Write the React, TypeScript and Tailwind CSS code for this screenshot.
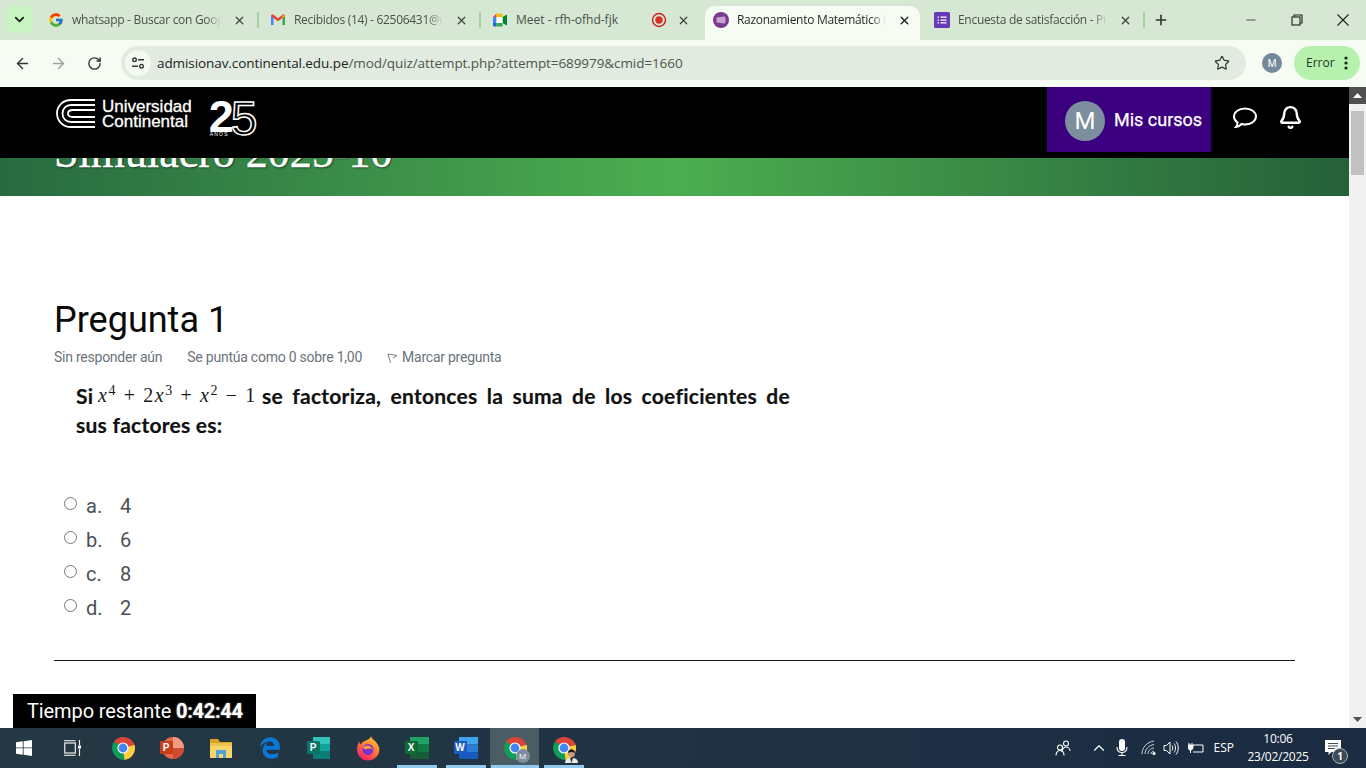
import React from "react";
import { ArrowLeft, ArrowRight, RotateCw, X, Plus, ChevronDown, Star, Minus, Bell, ChevronUp } from "lucide-react";
import { FcGoogle } from "react-icons/fc";
import { FaEdgeLegacy } from "react-icons/fa6";

const UI = { fontFamily: '"Open Sans", "Noto Sans", sans-serif' };
const RB = { fontFamily: 'Roboto, sans-serif' };

function Gmail() {
  return (
    <svg width="16" height="16" viewBox="0 0 16 16">
      <path d="M1 13V4l2.5 1.5V13z" fill="#4285f4" />
      <path d="M12.5 13V5.5L15 4v9z" fill="#34a853" />
      <path d="M1 4c0-1.5 1.5-2 2.5-1.2L8 6.2l4.5-3.4C13.5 2 15 2.500 15 4l-2.500 2L8 9.300 3.500 6z" fill="#ea4335" />
      <path d="M12.500 2.800 15 4l-2.500 2z" fill="#fbbc04" />
    </svg>
  );
}
function Meet() {
  return (
    <svg width="16" height="16" viewBox="0 0 16 16">
      <path d="M1 5l3.500-3.500V5z" fill="#ea4335" />
      <path d="M4.500 1.500H10.500V5H4.500z" fill="#fbbc04" />
      <path d="M1 5h3.500v6H1z" fill="#4285f4" />
      <path d="M1 11h3.500v3.500H2.500A1.500 1.500 0 0 1 1 13z" fill="#1967d2" />
      <path d="M4.500 11h6v3.500h-6z" fill="#34a853" />
      <path d="M10.500 1.500V14.500L10.500 8z" fill="#00832d" />
      <path d="M10.500 5v6l4.500 2.500v-11z" fill="#00832d" />
      <path d="M4.500 5H10.500V11H4.500z" fill="#fff" />
    </svg>
  );
}
function Moodle() {
  return (
    <svg width="16" height="16" viewBox="0 0 16 16">
      <circle cx="8" cy="8" r="8" fill="#7a3a8e" />
      <path d="M3.500 5.500 11 4.500c1.500 0 1.500 1 1.500 3.500s0 3.500-1.500 3.500l-7.500-1z" fill="#c7a3cf" />
    </svg>
  );
}
function Forms() {
  return (
    <svg width="16" height="16" viewBox="0 0 16 16">
      <rect width="16" height="16" rx="1.500" fill="#673ab7" />
      <path d="M6.500 4.500h6v1.300h-6zM6.500 7.400h6v1.300h-6zM6.500 10.300h6v1.300h-6z" fill="#fff" />
      <path d="M3.500 4.500h1.500v1.300H3.500zM3.500 7.400h1.500v1.300H3.500zM3.500 10.300h1.500v1.300H3.500z" fill="#fff" />
    </svg>
  );
}
function Rec() {
  return (
    <svg width="16" height="16" viewBox="0 0 16 16" className="-mr-[2px]">
      <circle cx="8" cy="8" r="6.500" fill="none" stroke="#c5221f" strokeWidth="1.400" />
      <circle cx="8" cy="8" r="3.700" fill="#d93025" />
    </svg>
  );
}

function Tab({ icon, title, active, extra, fade }: { icon: React.ReactNode; title: string; active?: boolean; extra?: React.ReactNode; fade?: boolean }) {
  return (
    <div className={active ? "h-[34px] w-[215px] mt-[6px] pb-[6px] flex items-center pl-2 pr-[8px] bg-[#f6fbf3] rounded-t-[10px] relative" : "h-[40px] w-[220px] flex items-center pl-[11px] pr-[10px]"}>
      <div className="w-4 h-4 shrink-0 flex items-center justify-center">{icon}</div>
      <div
        className={(active ? "text-[#1f2a1f] w-[150px]" : "text-[#46524a] ") + " ml-2 whitespace-nowrap overflow-hidden text-[12px] flex-1" + (fade ? " tracking-[-0.3px] [mask-image:linear-gradient(to_right,black_90%,transparent)]" : "")}
        style={UI}
      >
        {title}
      </div>
      {extra}
      <div className="w-4 h-4 flex items-center justify-center ml-[10px] shrink-0">
        <X size={13} strokeWidth={active ? 2.6 : 2.2} color={active ? "#1c241c" : "#38443a"} />
      </div>
    </div>
  );
}
const Sep = () => <div className="w-[2px] h-[16px] bg-[#a6cfa2] shrink-0" />;

function Chrome({ size = 24, children }: { size?: number; children?: React.ReactNode }) {
  return (
    <div className="relative" style={{ width: size, height: size }}>
      <svg width={size} height={size} viewBox="0 0 24 24">
        <path d="M12 12 L3 5.500 A12 12 0 0 1 23.600 8.800 Z" fill="#db4437" />
        <path d="M12 12 L3 5.500 A12 12 0 0 0 13.500 23.900 Z" fill="#0f9d58" />
        <path d="M12 12 L23.600 8.800 A12 12 0 0 1 13.500 23.900 Z" fill="#ffcd40" />
        <circle cx="12" cy="12" r="5.600" fill="#fff" />
        <circle cx="12" cy="12" r="4.400" fill="#4285f4" />
      </svg>
      {children}
    </div>
  );
}
function OfficeBadge({ letter, bg }: { letter: string; bg: string }) {
  return (
    <div className="absolute left-0 top-[5px] w-[13px] h-[13px] rounded-[1px] flex items-center justify-center text-white text-[10px] font-bold" style={{ background: bg, fontFamily: '"Liberation Sans", sans-serif' }}>
      {letter}
    </div>
  );
}
function Ppt() {
  return (
    <div className="relative w-6 h-6">
      <svg width="24" height="24" viewBox="0 0 24 24" className="absolute left-0 top-0">
        <circle cx="13" cy="12" r="11" fill="#e8664a" />
        <path d="M13 1a11 11 0 0 1 11 11H13z" fill="#f29b80" />
        <path d="M13 12h11a11 11 0 0 1-11 11z" fill="#cf4a2f" />
      </svg>
      <OfficeBadge letter="P" bg="#c43e1c" />
    </div>
  );
}
function Folder() {
  return (
    <svg width="24" height="22" viewBox="0 0 24 22">
      <path d="M1 2h8l2 3h12v16H1z" fill="#d9a520" />
      <path d="M1 6h22v15H1z" fill="#f9d66a" />
      <path d="M1 6h22v3H1z" fill="#eec24c" />
      <path d="M7 13h10v8h-3v-4h-4v4H7z" fill="#4ea3d8" />
    </svg>
  );
}
function Publisher() {
  return (
    <div className="relative w-6 h-6">
      <svg width="24" height="24" viewBox="0 0 24 24" className="absolute left-0 top-0">
        <rect x="6" y="1" width="17" height="22" rx="1.500" fill="#12a39a" />
        <rect x="6" y="1" width="17" height="7" fill="#31c4bb" />
        <rect x="6" y="15" width="17" height="8" fill="#0a7d78" />
      </svg>
      <OfficeBadge letter="P" bg="#077568" />
    </div>
  );
}
function Firefox() {
  return (
    <svg width="24" height="26" viewBox="0 0 24 26">
      <defs>
        <linearGradient id="ffx" x1="0.800" y1="0" x2="0.200" y2="1">
          <stop offset="0" stopColor="#ffcb2e" />
          <stop offset="0.500" stopColor="#ff7139" />
          <stop offset="1" stopColor="#f5156c" />
        </linearGradient>
      </defs>
      <path d="M15 1c.5 3 3 3.500 5 6 3 3.500 4 7 3 10.500C21.500 22 17 25.500 12 25.500 5.500 25.500 1 20.500 1 14.500 1 11 2 8.500 3.500 6.500c0 1.500.5 2.500 1.500 3C6 6.500 9 6 11 5c2-1 3.500-2 4-4z" fill="url(#ffx)" />
      <circle cx="12" cy="14.500" r="5.500" fill="#7a2fd0" />
      <path d="M7 12c3-2 6-2 8 0 1.500 1.500 2 3 1 5 2-4-3-4-5-3-1 .5-3 .5-4-2z" fill="#ff9a3c" />
    </svg>
  );
}
function OfficeTile({ letter, a, b, c, badge }: { letter: string; a: string; b: string; c: string; badge: string }) {
  return (
    <div className="relative w-6 h-6">
      <svg width="24" height="24" viewBox="0 0 24 24" className="absolute left-0 top-0">
        <rect x="5" y="1" width="19" height="7.500" fill={a} />
        <rect x="5" y="8.500" width="19" height="7.500" fill={b} />
        <rect x="5" y="16" width="19" height="7" fill={c} />
      </svg>
      <OfficeBadge letter={letter} bg={badge} />
    </div>
  );
}

function TaskCell({ children, active }: { children: React.ReactNode; active?: boolean }) {
  return <div className={"w-[49px] h-[40px] flex items-center justify-center " + (active ? "bg-[#4c5c64]" : "")}>{children}</div>;
}

export default function App() {
  return (
    <div className="w-[1366px] h-[768px] flex flex-col overflow-hidden bg-white">
      {/* tab strip */}
      <div className="h-[40px] bg-[#d6e7d3] flex items-start shrink-0">
        <div className="ml-[6px] mt-[6px] w-[27px] h-[27px] rounded-lg bg-[#c6f5c0] flex items-center justify-center">
          <ChevronDown size={15} strokeWidth={3} color="#1c241c" />
        </div>
        <div className="ml-[4px] flex items-center h-[40px]">
          <Tab fade icon={<FcGoogle size={16} />} title="whatsapp - Buscar con Google" />
          <Sep />
          <Tab fade icon={<Gmail />} title="Recibidos (14) - 62506431@continental" />
          <Sep />
          <div className="w-[224px]">
            <Tab icon={<Meet />} title="Meet - rfh-ofhd-fjk" extra={<Rec />} />
          </div>
        </div>
        <Tab active fade icon={<Moodle />} title="Razonamiento Matemático (Examen)" />
        <div className="ml-[3px] flex items-center h-[40px]">
          <Tab fade icon={<Forms />} title="Encuesta de satisfacción - Preguntas" />
          <Sep />
          <div className="ml-[8px] w-4 flex justify-center">
            <Plus size={16} strokeWidth={2.400} color="#2a362b" />
          </div>
        </div>
        <div className="flex-1" />
        <div className="flex items-center h-[40px]">
          <div className="w-[46px] flex justify-center"><Minus size={14} strokeWidth={1.300} color="#1c241c" /></div>
          <div className="w-[46px] flex justify-center">
            <svg width="12" height="12" viewBox="0 0 12 12" fill="none" stroke="#1c241c" strokeWidth="1.100">
              <rect x="1" y="3" width="8" height="8" />
              <path d="M3 3V1h8v8H9" />
            </svg>
          </div>
          <div className="w-[46px] flex justify-center">
            <svg width="14" height="14" viewBox="0 0 14 14" stroke="#1c241c" strokeWidth="1.100"><path d="M1.500 1.500l11 11M12.500 1.500l-11 11" /></svg>
          </div>
        </div>
      </div>
      {/* toolbar */}
      <div className="h-[47px] pb-[1px] bg-[#f6fbf3] flex items-center shrink-0">
        <div className="w-[44px] flex justify-center"><ArrowLeft size={17} strokeWidth={2} color="#2d3a30" /></div>
        <div className="w-[28px] flex justify-center"><ArrowRight size={17} strokeWidth={2} color="#9aa69b" /></div>
        <div className="w-[44px] flex justify-center"><RotateCw size={15} strokeWidth={2.200} color="#2d3a30" /></div>
        <div className="ml-[5px] w-[1125px] h-[34px] rounded-full bg-[#e2ebdf] flex items-center relative">
          <div className="ml-[4px] w-[26px] h-[26px] rounded-full bg-[#f3f8f0] flex items-center justify-center">
            <svg width="14" height="12" viewBox="0 0 14 12" fill="none" stroke="#2d3a30" strokeWidth="1.400">
              <circle cx="3.500" cy="2.800" r="1.800" />
              <path d="M7 2.800h6M1 9.200h6" />
              <circle cx="10.500" cy="9.200" r="1.800" />
            </svg>
          </div>
          <div className="ml-[6px] text-[13.5px] whitespace-nowrap text-[#1b241c] tracking-[-0.08px]" style={UI}>
            admisionav.continental.edu.pe<span className="text-[#4c584e]">/mod/quiz/attempt.php?attempt=689979&amp;cmid=1660</span>
          </div>
          <div className="flex-1" />
          <Star size={16} strokeWidth={1.800} color="#2d3a30" className="mr-[16px]" />
        </div>
        <div className="ml-[16px] w-5 h-5 rounded-full bg-[#748a9c] text-white text-[10px] flex items-center justify-center" style={RB}>M</div>
        <div className="ml-[12px] w-[66px] h-[34px] rounded-full bg-[#b6f1ad] flex items-center pl-[12px]">
          <span className="text-[12px] text-[#27342a]" style={UI}>Error</span>
          <svg width="4" height="14" viewBox="0 0 4 14" className="ml-[9px]" fill="#1c241c">
            <circle cx="2" cy="2" r="1.600" /><circle cx="2" cy="7" r="1.600" /><circle cx="2" cy="12" r="1.600" />
          </svg>
        </div>
      </div>
      {/* page + scrollbar */}
      <div className="flex-1 min-h-0 flex">
        <div className="flex-1 min-w-0 relative overflow-hidden" style={RB}>
          <header className="h-[71px] bg-black flex items-start">
            <div className="ml-[56px] mt-[11px] flex items-start">
              <svg width="40" height="32" viewBox="0 0 40 32" fill="none" stroke="#fff" strokeWidth="1.800">
                <path d="M39 2H15C7 2 1 8 1 15.500S7 29 15 29h24" />
                <path d="M39 7H15C10 7 6.500 10.500 6.500 15.500S10 24 15 24h24" />
                <path d="M39 12H17c-3 0-5 1.500-5 3.500s2 3.500 5 3.500h22" />
              </svg>
              <div className="ml-[6px] text-white text-[17px] leading-[15px] font-normal mt-[1px] [-webkit-text-stroke:0.3px_white]" style={{ fontFamily: '"Liberation Sans", sans-serif' }}>
                Universidad<br />Continental
              </div>
              <div className="ml-[17px] -mt-[7px] flex items-start relative text-white" style={{ fontFamily: '"Liberation Sans", sans-serif' }}>
                <span className="text-[45px] leading-[52px] font-bold">2</span>
                <span className="text-[48px] leading-[56px] font-normal -ml-[3px] text-transparent [-webkit-text-stroke:1.500px_white]">5</span>
                <span className="absolute left-[1px] top-[41px] text-[5px] tracking-[1.200px] leading-none">AÑOS</span>
              </div>
            </div>
            <div className="flex-1" />
            <div className="w-[164px] h-[65px] pt-[2px] bg-[#3b0080] flex items-center pl-[18px]">
              <div className="w-10 h-10 rounded-full bg-[#7d8f9e] text-white text-[24px] flex items-center justify-center">M</div>
              <span className="ml-[9px] -mt-[2px] text-white text-[18px] font-normal [-webkit-text-stroke:0.25px_white]">Mis cursos</span>
            </div>
            <div className="ml-[21px] mt-[18px]">
              <svg width="26" height="26" viewBox="0 0 26 26" fill="none" stroke="#fff" strokeWidth="2">
                <path d="M13 3.500c6 0 11 3.500 11 8s-5 8-11 8c-1.500 0-2.500-.2-3.500-.5-1.500 1.800-3.500 3-5.500 3 1-1.200 1.500-2.500 1.500-4.500C3.300 16 2 14 2 11.500c0-4.500 5-8 11-8z" />
              </svg>
            </div>
            <div className="ml-[20px] mt-[18px]">
              <Bell size={25} strokeWidth={2.300} color="#fff" />
            </div>
            <div className="w-[46px]" />
          </header>
          <div className="h-[38px] overflow-hidden bg-[linear-gradient(90deg,#286a40_0%,#4cae50_50%,#256039_100%)]">
            <div className="pl-[54px] -mt-[35px] text-[44px] leading-[60px] text-white whitespace-nowrap [-webkit-text-stroke:0.4px_white] [text-shadow:1px_1px_2px_rgba(0,0,0,0.6)]" style={{ fontFamily: '"Liberation Serif", serif' }}>
              Simulacro 2025-10
            </div>
          </div>
          <main className="pl-[54px] pr-[54px] pt-[100px]">
            <h2 className="text-[36px] leading-[48px] text-[#0a0a0a]">Pregunta 1</h2>
            <div className="mt-[3px] flex items-center text-[14px] leading-[20px] text-[#6a737b] tracking-[-0.24px]">
              <span>Sin responder aún</span>
              <span className="ml-[25px]">Se puntúa como 0 sobre 1,00</span>
              <svg width="11" height="11" viewBox="0 0 11 11" fill="none" stroke="#6a737b" strokeWidth="0.900" className="ml-[25px] mt-[3px]">
                <path d="M1 1l9 1.500-4 2.500M1 1l2.500 9" />
              </svg>
              <span className="ml-[4px]">Marcar pregunta</span>
            </div>
            <div className="ml-[22px] mt-[14px] w-[714px] text-[21px] leading-[29px] font-bold text-[#111] tracking-[0.25px] [-webkit-text-stroke:0.2px_#111]" style={{ fontFamily: 'Lato, sans-serif' }}>
              <div className="h-[29px] flex">
                <span className="w-[22px] shrink-0">Si</span>
                <span className="w-[164px] shrink-0 whitespace-nowrap font-normal text-[20px] tracking-[1.600px] text-[#1a1a1a] [-webkit-text-stroke:0] leading-[29px]" style={{ fontFamily: '"Liberation Serif", serif' }}>
                  <i>x</i><sup className="text-[14px]">4</sup> + 2<i>x</i><sup className="text-[14px]">3</sup> + <i>x</i><sup className="text-[14px]">2</sup> − 1
                </span>
                <span className="flex-1 min-w-0 [text-align:justify] [text-align-last:justify]">se factoriza, entonces la suma de los coeficientes de</span>
              </div>
              <div>sus factores es:</div>
            </div>
            <div className="mt-[50px] flex flex-col">
              {[["a.", "4"], ["b.", "6"], ["c.", "8"], ["d.", "2"]].map(([l, v]) => (
                <div key={l} className="h-[34px] flex items-center text-[20px] text-[#495057]">
                  <span className="ml-[10px] -mt-[6px] w-[13px] h-[13px] rounded-full border border-[#767676] bg-white shrink-0" />
                  <span className="ml-[9px] w-[34px]">{l}</span>
                  <span>{v}</span>
                </div>
              ))}
            </div>
            <hr className="mt-[35px] border-t border-[#1a1a1a]" />
          </main>
          <div className="absolute left-[13px] bottom-0 w-[243px] h-[34px] pb-[1px] bg-black text-white text-[20px] tracking-[-0.1px] flex items-center pl-[14px]">
            Tiempo restante&nbsp;<b className="tracking-[-0.3px] [text-shadow:0_0_2px_rgba(255,255,255,0.7)]">0:42:44</b>
          </div>
        </div>
        <div className="w-[17px] bg-[#f1f1f1] flex flex-col shrink-0 items-center">
          <div className="w-[17px] h-[17px] bg-[#505050] flex items-center justify-center">
            <svg width="9" height="5" viewBox="0 0 9 5" fill="#fff"><path d="M4.500 0 9 5H0z" /></svg>
          </div>
          <div className="mt-[7px] w-[13px] h-[64px] bg-[#c1c1c1]" />
          <div className="flex-1" />
          <div className="w-[17px] h-[17px] flex items-center justify-center">
            <svg width="9" height="5" viewBox="0 0 9 5" fill="#505050"><path d="M4.500 5 9 0H0z" /></svg>
          </div>
        </div>
      </div>
      {/* taskbar */}
      <div className="h-[40px] shrink-0 bg-[linear-gradient(90deg,#253944,#1a2b42)] flex items-center relative text-white" style={{ fontFamily: '"Open Sans", sans-serif' }}>
        <div className="w-[48px] flex justify-center">
          <svg width="16" height="16" viewBox="0 0 16 16" fill="#fff">
            <path d="M0 2.300 6.800 1.300v6.200H0zM7.600 1.200 16 0v7.500H7.600zM0 8.300h6.800v6.400L0 13.700zM7.600 8.300H16V16l-8.400-1.200z" />
          </svg>
        </div>
        <div className="w-[48px] flex justify-center">
          <svg width="17" height="16" viewBox="0 0 17 16" fill="none" stroke="#fff" strokeWidth="1.100">
            <rect x="0.800" y="3" width="10.500" height="10" />
            <path d="M0 0.700h11.500M0 15.300h11.500M15.500 0v5M15.500 9v7" />
            <path d="M14.500 6h2v2h-2z" fill="#fff" />
          </svg>
        </div>
        <div className="w-[2px]" />
        <TaskCell><Chrome /></TaskCell>
        <TaskCell><Ppt /></TaskCell>
        <TaskCell><Folder /></TaskCell>
        <TaskCell><FaEdgeLegacy size={22} color="#0a78d7" /></TaskCell>
        <TaskCell><Publisher /></TaskCell>
        <TaskCell><Firefox /></TaskCell>
        <TaskCell><OfficeTile letter="X" a="#21a366" b="#107c41" c="#185c37" badge="#0e6b38" /></TaskCell>
        <TaskCell><OfficeTile letter="W" a="#41a5ee" b="#2b7cd3" c="#185abd" badge="#1a5cc0" /></TaskCell>
        <TaskCell active>
          <Chrome>
            <div className="absolute -right-[3px] -bottom-[3px] w-[14px] h-[14px] rounded-full bg-[#7d8f9e] text-[8px] flex items-center justify-center text-white">M</div>
          </Chrome>
        </TaskCell>
        <TaskCell>
          <Chrome>
            <svg width="15" height="15" viewBox="0 0 15 15" className="absolute -right-[3px] -bottom-[3px]">
              <path d="M1 15c0-4 3-5 6.500-5s6.500 1 6.500 5z" fill="#e8e8e8" />
              <path d="M6 10h3l-1.500 5z" fill="#243042" />
              <circle cx="7.500" cy="5.500" r="3.500" fill="#c99a7c" />
              <path d="M4 5c0-5 7-5 7 0-2-1.500-5-1.500-7 0z" fill="#1a1a1a" />
            </svg>
          </Chrome>
        </TaskCell>
        <div className="flex-1" />
        <svg width="16" height="16" viewBox="0 0 16 16" fill="none" stroke="#fff" strokeWidth="1.100" className="mr-[19px]">
          <circle cx="11" cy="3.500" r="2.500" />
          <path d="M7 12c0-3 2-5 4-5s4 1.500 4 4" />
          <circle cx="5" cy="7.500" r="2.500" />
          <path d="M1 15.500c0-3 1.800-5 4-5s4 2 4 5" />
        </svg>
        <ChevronUp size={18} strokeWidth={1.500} color="#fff" className="mr-[8px]" />
        <svg width="12" height="18" viewBox="0 0 12 18" className="mr-[13px]" fill="none" stroke="#fff" strokeWidth="1.100">
          <rect x="3" y="0" width="6" height="12" rx="3" fill="#fff" stroke="none" />
          <path d="M1 8c0 3.500 2 5.500 5 5.500S11 11.500 11 8M6 13.500V16M2.500 16.500h7" />
        </svg>
        <svg width="16" height="16" viewBox="0 0 16 16" fill="none" stroke="#dfe5e8" strokeWidth="0.900" className="mr-[6px]">
          <path d="M1 14C1 7.500 6 2 13 1M4 14c0-4.500 3.500-8.500 9-9.500M7 14c0-3 2-5.500 6-6M10 14c0-1.500.8-2.800 3-3" />
          <circle cx="13" cy="13.500" r="1.300" fill="#fff" />
        </svg>
        <svg width="16" height="16" viewBox="0 0 16 16" fill="none" stroke="#fff" strokeWidth="1" className="mr-[9px]">
          <path d="M1 5.500h2.500L7 2v12l-3.500-3.500H1zM9 5.500c1 1.500 1 3.500 0 5M11 3.500c2 2.500 2 6.500 0 9M13 1.500c3 3.500 3 9.500 0 13" />
        </svg>
        <svg width="16" height="12" viewBox="0 0 16 12" fill="none" stroke="#fff" strokeWidth="1" className="mr-[10px]">
          <path d="M5 3h10v7H5" />
          <path d="M1 1v2M4 1v2M0 3h5v2.500c0 1.500-1 2.500-2.500 2.500S0 7 0 5.500zM2.500 8v3" fill="#fff" />
        </svg>
        <span className="text-[12px] mr-[14px]">ESP</span>
        <div className="text-[12px] leading-[18px] tracking-[-0.25px] text-center mr-[17px] w-[60px] whitespace-nowrap flex flex-col items-center">
          <span>10:06</span>
          <span>23/02/2025</span>
        </div>
        <div className="relative mr-[25px] w-[16px] h-[16px]">
          <svg width="16" height="16" viewBox="0 0 16 16" fill="#fff">
            <path d="M0 0h16v12H6.500L3.500 15v-3H0z" />
            <path d="M3 3.500h10M3 6h10M3 8.500h7" stroke="#253944" strokeWidth="0.900" />
          </svg>
          <div className="absolute left-[7px] top-[8px] w-[16px] h-[16px] rounded-full bg-[#3d4a55] border border-[#aab2b8] text-[10px] font-bold flex items-center justify-center">1</div>
        </div>
      </div>
      {/* taskbar underlines */}
      <div className="absolute left-[397px] top-[765px] w-[40px] h-[3px] bg-[#92c9ef]" />
      <div className="absolute left-[446px] top-[765px] w-[40px] h-[3px] bg-[#92c9ef]" />
      <div className="absolute left-[491px] top-[765px] w-[48px] h-[3px] bg-[#92c9ef]" />
      <div className="absolute left-[544px] top-[765px] w-[40px] h-[3px] bg-[#92c9ef]" />
    </div>
  );
}
